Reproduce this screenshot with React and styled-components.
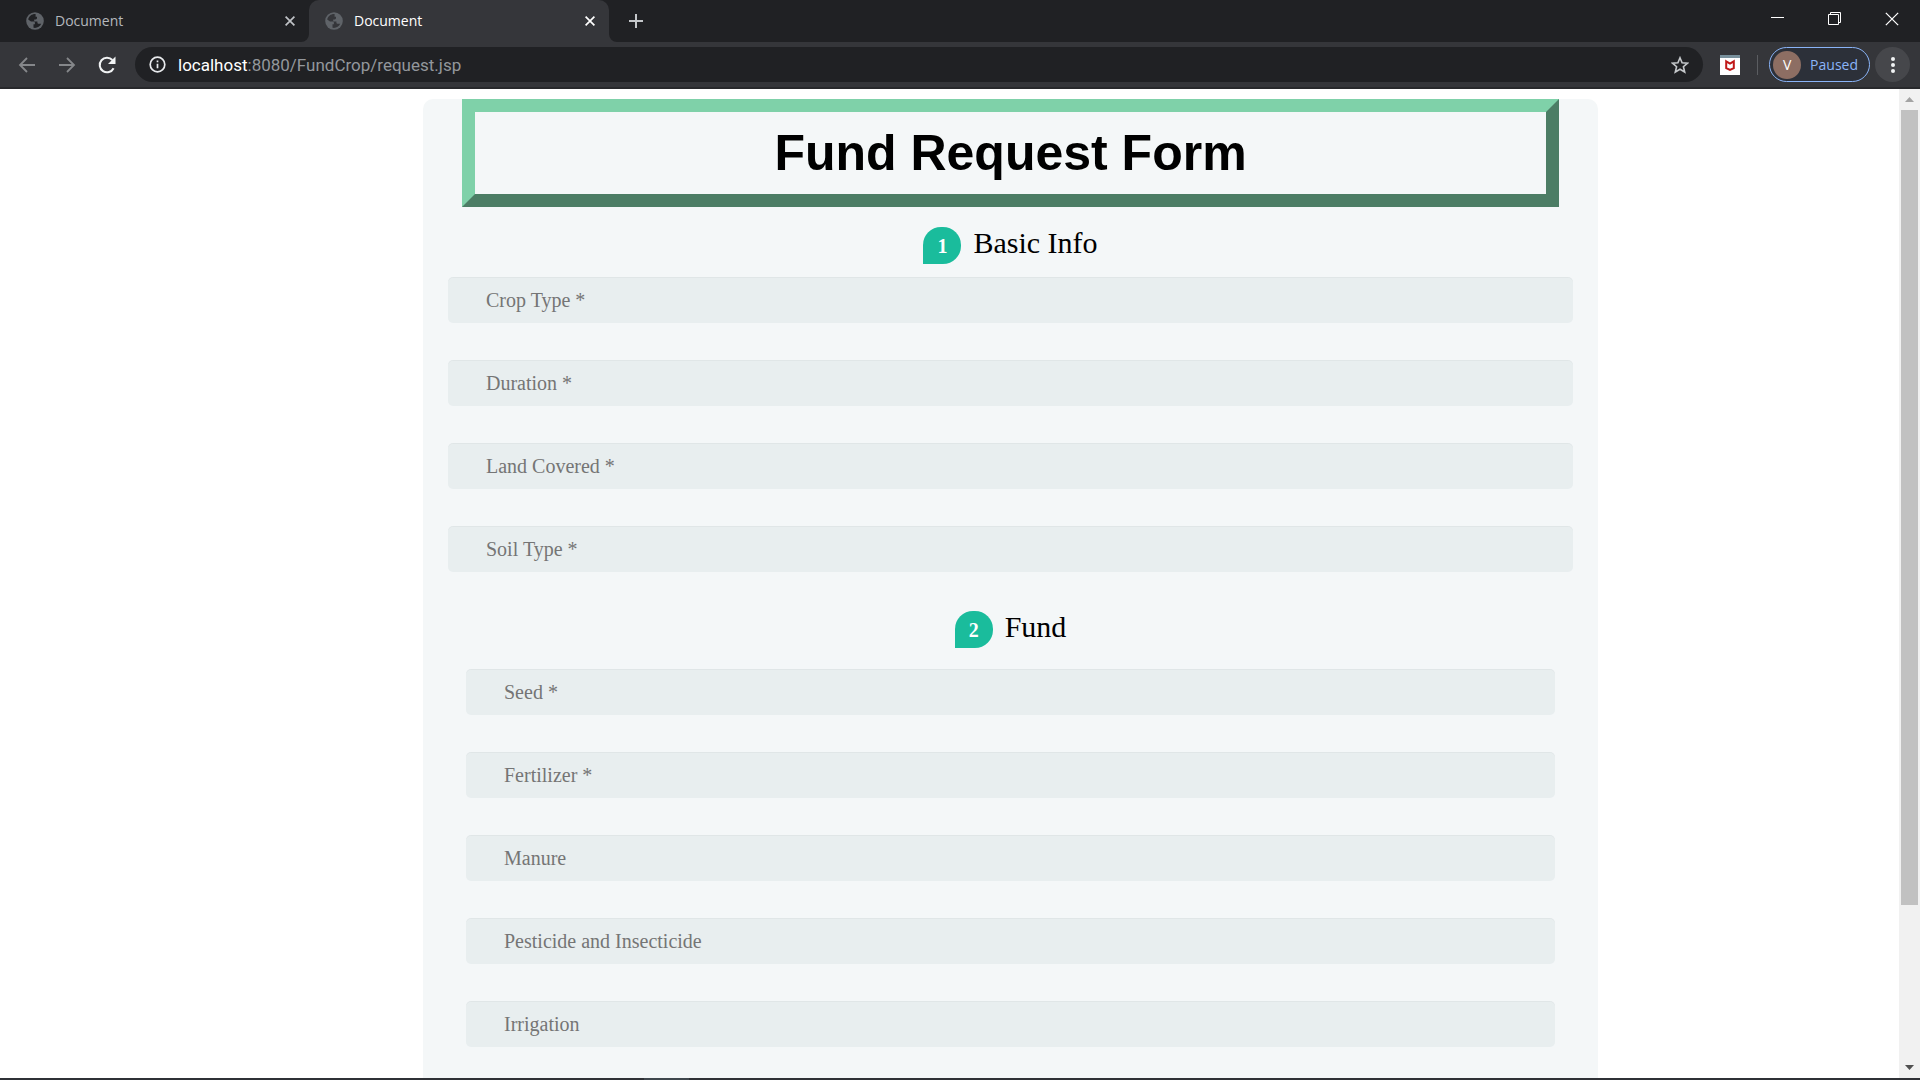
import React from "react";
import styled, { createGlobalStyle } from "styled-components";

const ui = `"Open Sans", "Noto Sans", sans-serif`;
const serif = `"Liberation Serif", "Times New Roman", serif`;

const Global = createGlobalStyle`
  * { box-sizing: border-box; }
  body { margin: 0; background: #fff; }
  button { border: 0; padding: 0; background: none; font: inherit; color: inherit; }
`;

const Window = styled.div`
  height: 100vh;
  display: flex;
  flex-direction: column;
  overflow: hidden;
  font-family: ${ui};
`;

const TabStrip = styled.header`
  flex: none;
  height: 42px;
  display: flex;
  justify-content: space-between;
  background: #202124;
`;

const Tabs = styled.nav`
  display: flex;
  align-items: stretch;
`;

const Tab = styled.div`
  position: relative;
  width: ${(p) => (p.$active ? 300 : 309)}px;
  padding: 0 10px 0 ${(p) => (p.$active ? 16 : 26)}px;
  display: flex;
  align-items: center;
  gap: 11px;
  border-radius: 10px 10px 0 0;
  background: ${(p) => (p.$active ? "#35363a" : "transparent")};
  color: ${(p) => (p.$active ? "#fff" : "#b4b8bd")};
`;

const TabFoot = styled.svg`
  position: absolute;
  bottom: 0;
  ${(p) => p.$side}: -8px;
  width: 8px;
  height: 8px;
`;

const TabTitle = styled.span`
  flex: 1;
  font-size: 14px;
  line-height: 20px;
`;

const IconButton = styled.button`
  flex: none;
  display: grid;
  place-items: center;
  width: ${(p) => p.$size}px;
  height: ${(p) => p.$size}px;
  border-radius: 50%;
  background: ${(p) => p.$fill || "transparent"};
`;

const NewTab = styled(IconButton)`
  align-self: center;
  margin-left: 13px;
`;

const WindowButtons = styled.div`
  display: flex;
`;

const WindowButton = styled.button`
  width: 57px;
  height: 37px;
  display: grid;
  place-items: center;
`;

const Toolbar = styled.div`
  flex: none;
  height: 47px;
  display: flex;
  align-items: center;
  padding: 0 10px 0 8px;
  background: #35363a;
  border-bottom: 2px solid #28292c;
`;

const NavButtons = styled.div`
  display: flex;
  gap: 2px;
  margin-right: 9px;
`;

const AddressBar = styled.div`
  flex: 1;
  min-width: 0;
  height: 35px;
  display: flex;
  align-items: center;
  padding: 0 6px 0 14px;
  border-radius: 18px;
  background: #202124;
`;

const Address = styled.a`
  flex: 1;
  margin-left: 12px;
  color: #93979c;
  font: 17px/24px Roboto, sans-serif;
  text-decoration: none;
  white-space: nowrap;
`;

const Host = styled.span`
  color: #fff;
`;

const Extension = styled.button`
  width: 20px;
  height: 20px;
  margin: 0 17px;
`;

const Divider = styled.span`
  width: 1px;
  height: 20px;
  background: #5b5d61;
  margin-right: 11px;
`;

const Profile = styled.button`
  height: 35px;
  display: flex;
  align-items: center;
  gap: 9px;
  padding: 0 11px 0 3px;
  margin-right: 5px;
  border: 1px solid #8ab4f8;
  border-radius: 18px;
  background: #2c3039;
  color: #8ab4f8;
  font-size: 14px;
  line-height: 20px;
`;

const Avatar = styled.span`
  width: 28px;
  height: 28px;
  border-radius: 50%;
  background: #8d6e63;
  color: #fff;
  line-height: 28px;
  text-align: center;
`;

const Viewport = styled.div`
  flex: 1;
  min-height: 0;
  display: flex;
`;

const Page = styled.main`
  flex: 1;
  min-width: 0;
  overflow: hidden;
  padding: 10px 301px 0 423px;
  background: #fff;
`;

const FormCard = styled.form`
  min-height: 1200px;
  padding: 0 25px;
  border-radius: 10px;
  background: #f4f7f8;
  font-family: ${serif};
`;

const Title = styled.h1`
  margin: 0 14px 20px;
  height: 108px;
  border: 13px solid;
  border-color: #7fd1a9 #4c7d65 #4c7d65 #7fd1a9;
  color: #000;
  font: bold 50px/82px "Liberation Sans", Arial, sans-serif;
  text-align: center;
`;

const Section = styled.fieldset`
  min-width: 0;
  margin: 0 0 39px;
  padding: 0 ${(p) => p.$inset || 0}px;
  border: 0;
`;

const SectionTitle = styled.legend`
  width: 100%;
  height: 37px;
  display: flex;
  justify-content: center;
  gap: 12px;
  padding: 0;
  margin-bottom: ${(p) => p.$space}px;
  color: #000;
  font-size: 30px;
  line-height: 32px;
`;

const StepBadge = styled.span`
  width: 38px;
  height: 37px;
  border-radius: 18px 18px 18px 0;
  background: #1abc9c;
  color: #fff;
  font-size: 20px;
  font-weight: bold;
  line-height: 38px;
  text-align: center;
`;

const Fields = styled.div`
  display: grid;
  gap: 37px;
`;

const Field = styled.input`
  width: 100%;
  height: 46px;
  padding: 0 38px;
  border: 0;
  border-radius: 5px;
  outline: 0;
  background: #e8eeef;
  box-shadow: 0 1px 0 rgba(0, 0, 0, 0.03) inset;
  color: #8a97a0;
  font: 20px/24px ${serif};
  &::placeholder { color: #757575; opacity: 1; }
`;

const ScrollBar = styled.div`
  flex: none;
  width: 21px;
  display: flex;
  flex-direction: column;
  align-items: center;
  background: #f1f1f1;
`;

const ScrollArrow = styled.button`
  flex: none;
  width: 21px;
  height: 21px;
  display: grid;
  place-items: center;
`;

const Track = styled.div`
  flex: 1;
  width: 17px;
`;

const Thumb = styled.div`
  height: 84%;
  background: #c1c1c1;
`;

const TaskbarEdge = styled.footer`
  flex: none;
  height: 2px;
  display: flex;
  padding-left: 644px;
  background: #2f3136;
`;

const TaskbarApp = styled.span`
  width: 45px;
  background: #3f474d;
`;

const Globe = ({ hole }) => (
  <svg width="18" height="18" viewBox="0 0 18 18" aria-hidden="true">
    <circle cx="9" cy="9" r="8.8" fill="#5f6368" />
    <path
      d="M9.600 2C6 1.800 3 4 2.200 7.400L5 9.400h2.400c.9 0 1.500.6 1.500 1.400v1.400H7.500v3.600c3.300.6 6.400-1 7.700-4h-2.400c-.9 0-1.400-.5-1.400-1.300V9.600H8.200V7.400h1.500c.8 0 1.300-.5 1.300-1.300V4.800H9.600z"
      fill={hole}
    />
  </svg>
);

const Cross = ({ size, color, width }) => (
  <svg width={size} height={size} viewBox="0 0 10 10" stroke={color} strokeWidth={width} aria-hidden="true">
    <path d="M.6.6l8.8 8.8M9.4.6L.6 9.4" />
  </svg>
);

const Arrow = ({ flip }) => (
  <svg width="20" height="20" viewBox="0 0 20 20" fill="none" stroke="#85878a" strokeWidth="1.8" aria-hidden="true">
    <path d={flip ? "M2 10h14.5M10 3l7 7-7 7" : "M18 10H3.500M10 3l-7 7 7 7"} />
  </svg>
);

const BrowserTab = ({ active, title }) => (
  <Tab $active={active}>
    {active && (
      <>
        <TabFoot $side="left" viewBox="0 0 8 8"><path d="M8 0v8H0a8 8 0 0 0 8-8z" fill="#35363a" /></TabFoot>
        <TabFoot $side="right" viewBox="0 0 8 8"><path d="M0 0v8h8a8 8 0 0 1-8-8z" fill="#35363a" /></TabFoot>
      </>
    )}
    <Globe hole={active ? "#35363a" : "#202124"} />
    <TabTitle>{title}</TabTitle>
    <IconButton $size={18} aria-label="Close tab">
      <Cross size={10} color={active ? "#fff" : "#c0c3c7"} width={1.7} />
    </IconButton>
  </Tab>
);

const sections = [
  { step: 1, name: "Basic Info", space: 13, inset: 0, fields: ["Crop Type *", "Duration *", "Land Covered *", "Soil Type *"] },
  { step: 2, name: "Fund", space: 21, inset: 18, fields: ["Seed *", "Fertilizer *", "Manure", "Pesticide and Insecticide", "Irrigation"] },
];

export default function App() {
  return (
    <Window>
      <Global />
      <TabStrip>
        <Tabs>
          <BrowserTab title="Document" />
          <BrowserTab title="Document" active />
          <NewTab $size={28} aria-label="New tab">
            <svg width="16" height="16" viewBox="0 0 16 16" stroke="#c4c7ca" strokeWidth="2"><path d="M8 1v14M1 8h14" /></svg>
          </NewTab>
        </Tabs>
        <WindowButtons>
          <WindowButton aria-label="Minimize">
            <svg width="13" height="13" viewBox="0 0 13 13"><path d="M0 5h13v1H0z" fill="#fff" /></svg>
          </WindowButton>
          <WindowButton aria-label="Restore">
            <svg width="13" height="13" viewBox="0 0 13 13" fill="none" stroke="#fff"><path d="M.5 2.500h10v10H.5zM2.500 2.500v-2h10v10h-2" /></svg>
          </WindowButton>
          <WindowButton aria-label="Close">
            <Cross size={14} color="#fff" width={0.9} />
          </WindowButton>
        </WindowButtons>
      </TabStrip>

      <Toolbar>
        <NavButtons>
          <IconButton $size={38} aria-label="Back"><Arrow /></IconButton>
          <IconButton $size={38} aria-label="Forward"><Arrow flip /></IconButton>
          <IconButton $size={38} aria-label="Reload">
            <svg width="20" height="20" viewBox="0 0 20 20" fill="none">
              <path d="M16.600 13.200A7.300 7.300 0 1 1 15.400 5" stroke="#f1f3f4" strokeWidth="2" />
              <path d="M18.500 1.500v7.500H11z" fill="#f1f3f4" />
            </svg>
          </IconButton>
        </NavButtons>
        <AddressBar>
          <svg width="17" height="17" viewBox="0 0 17 17" fill="none" stroke="#e8eaed" strokeWidth="1.7">
            <circle cx="8.500" cy="8.500" r="7.300" /><path d="M8.500 7.700v4.600M8.500 4.500v1.800" />
          </svg>
          <Address href="#"><Host>localhost</Host>:8080/FundCrop/request.jsp</Address>
          <IconButton $size={34} aria-label="Bookmark this page">
            <svg width="18" height="18" viewBox="0 0 18 18" fill="none" stroke="#c4c7ca" strokeWidth="1.6">
              <path d="M9 1.800l2.100 5 5.400.4-4.100 3.500 1.300 5.300L9 13.200 4.300 16l1.300-5.300L1.500 7.200l5.400-.4z" />
            </svg>
          </IconButton>
        </AddressBar>
        <Extension aria-label="McAfee WebAdvisor">
          <svg width="20" height="20" viewBox="0 0 20 20">
            <path d="M0 0h20v20H0z" fill="#fff" /><path d="M0 0h20v3H0z" fill="#78909c" />
            <path d="M6.200 6.300L10 8.600l3.800-2.300v6.800L10 15l-3.800-1.900z" fill="none" stroke="#c01818" strokeWidth="2" />
          </svg>
        </Extension>
        <Divider />
        <Profile><Avatar>V</Avatar>Paused</Profile>
        <IconButton $size={35} $fill="#46474b" aria-label="Menu">
          <svg width="4" height="16" viewBox="0 0 4 16" fill="#f1f3f4"><circle cx="2" cy="2" r="2" /><circle cx="2" cy="8" r="2" /><circle cx="2" cy="14" r="2" /></svg>
        </IconButton>
      </Toolbar>

      <Viewport>
        <Page>
          <FormCard>
            <Title>Fund Request Form</Title>
            {sections.map((s) => (
              <Section key={s.step} $inset={s.inset}>
                <SectionTitle $space={s.space}><StepBadge>{s.step}</StepBadge>{s.name}</SectionTitle>
                <Fields>
                  {s.fields.map((f) => <Field key={f} type="text" placeholder={f} aria-label={f} />)}
                </Fields>
              </Section>
            ))}
          </FormCard>
        </Page>
        <ScrollBar>
          <ScrollArrow aria-label="Scroll up"><svg width="9" height="5" viewBox="0 0 9 5"><path d="M0 5l4.500-5L9 5z" fill="#a3a3a3" /></svg></ScrollArrow>
          <Track><Thumb /></Track>
          <ScrollArrow aria-label="Scroll down"><svg width="9" height="5" viewBox="0 0 9 5"><path d="M0 0l4.500 5L9 0z" fill="#505050" /></svg></ScrollArrow>
        </ScrollBar>
      </Viewport>
      <TaskbarEdge><TaskbarApp /></TaskbarEdge>
    </Window>
  );
}
